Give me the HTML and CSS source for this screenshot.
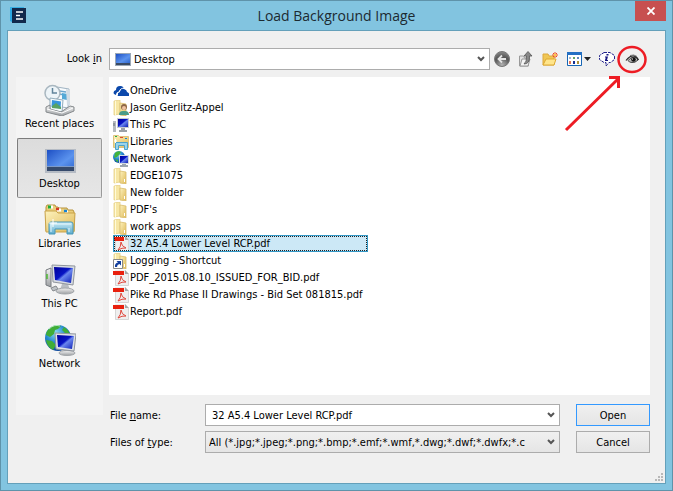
FILE: index.html
```html
<!DOCTYPE html>
<html lang="en">
<head>
<meta charset="utf-8">
<title>Load Background Image</title>
<link rel="stylesheet" href="styles.css">
</head>
<body>
<svg class="defs" aria-hidden="true">
  <defs>
    <linearGradient id="screen" x1="0" y1="0" x2="1" y2="1"><stop offset="0" stop-color="#1d4fc4"/><stop offset=".6" stop-color="#5b93ee"/><stop offset="1" stop-color="#2e66cf"/></linearGradient>
    <linearGradient id="navy" x1="0" y1="0" x2="1" y2="1"><stop offset="0" stop-color="#00009a"/><stop offset=".45" stop-color="#0714c4"/><stop offset=".55" stop-color="#6a86ee"/><stop offset="1" stop-color="#0a1cb4"/></linearGradient>
    <linearGradient id="paper" x1="0" y1="0" x2="1" y2="1"><stop offset="0" stop-color="#fdf2bd"/><stop offset="1" stop-color="#dfb957"/></linearGradient>
    <linearGradient id="metal" x1="0" y1="0" x2="0" y2="1"><stop offset="0" stop-color="#f4f4f4"/><stop offset="1" stop-color="#9c9fa2"/></linearGradient>
    <linearGradient id="glass" x1="0" y1="0" x2="0" y2="1"><stop offset="0" stop-color="#c9eaf5"/><stop offset="1" stop-color="#5daccd"/></linearGradient>
    <radialGradient id="globe" cx=".4" cy=".3" r=".75"><stop offset="0" stop-color="#8edcf5"/><stop offset=".5" stop-color="#2488cf"/><stop offset="1" stop-color="#0a3f94"/></radialGradient>
    <radialGradient id="ball" cx=".5" cy=".9" r=".9"><stop offset="0" stop-color="#b4b4b4"/><stop offset=".6" stop-color="#555"/><stop offset="1" stop-color="#8c8c8c"/></radialGradient>
  </defs>
  <symbol id="i-desktop" viewBox="0 0 32 32">
    <path d="M1 5h31v24H1z" fill="#b5bbc4"/><path d="M3 6h27v21H3z" fill="url(#screen)"/><path d="M3 23h27v4H3z" fill="#364a6b"/><path d="M3 22.500h27" stroke="#7d9ac8"/>
  </symbol>
  <symbol id="i-desktop-s" viewBox="0 0 16 13">
    <path d="M0 0h16v13H0z" fill="#9aa7b5"/><path d="M1 1h14v9H1z" fill="url(#screen)"/><path d="M1 10h14v2H1z" fill="#3a4a63"/>
  </symbol>
  <symbol id="i-recent" viewBox="0 0 32 32">
    <path d="M13 3l12 2-1 19-12-2z" fill="#f8fbfd" stroke="#9fb3c2"/><path d="M15 7l7 1M15 10l3 .5" stroke="#6aa5ce" stroke-width="1.500"/><path d="M18 9l6 1-1 6-5-1z" fill="#53a9d7"/><path d="M22 5l4 1v15h-3" fill="#d2dce4"/>
    <circle cx="8.500" cy="9" r="7.500" fill="#edf4f8" stroke="#a9b7c0" stroke-width="1.500"/><path d="M8.500 4v5H13" fill="none" stroke="#61849b" stroke-width="1.500"/>
    <path d="M6 14l13 2-1 12-12-2z" fill="#f5fafc" stroke="#92adbd"/><path d="M8 16l9 1.500-.5 7L7.500 23z" fill="#3795dc"/><path d="M8 22l4-3 5 4v2l-9-1z" fill="#58a264"/>
    <path d="M2 23l4-2v4l11 3 9-6 4 1v4l-12 5L2 28z" fill="url(#metal)" stroke="#85898c"/><path d="M3 25l15 4 11-5" fill="none" stroke="#fff"/>
  </symbol>
  <symbol id="i-libraries" viewBox="0 0 32 32">
    <path d="M2 8V3l1-2h8l1 2h2l1 1h8l1 2h5l1 2v19H2z" fill="#eace7b" stroke="#b8943f"/>
    <path d="M5 3h4M13 6h4M21 8h3" stroke="#fff" stroke-width="3"/><path d="M4 3h3" stroke="#1cae38" stroke-width="3"/><path d="M12 5h3" stroke="#d43a28" stroke-width="2.500"/><path d="M20 7h3" stroke="#1684d6" stroke-width="2.500"/>
    <path d="M1 7h11l2 2h17l-1 19H2z" fill="url(#paper)" stroke="#c9a34a"/>
    <path d="M5 30V20q0-2 2-2h20q2 0 2 2v10h-6v-5H11v5z" fill="url(#glass)" stroke="#4797b8"/><path d="M7 20h20M7 20v8M25 24v4" stroke="#e5f7fd" fill="none"/><path d="M9 15v8M5 19h8" stroke="#fff"/>
  </symbol>
  <symbol id="i-libraries-s" viewBox="0 0 16 16">
    <path d="M.5 13.500v-12h5l1 1h9v11z" fill="url(#paper)" stroke="#dfc37c"/><path d="M2 2.500h2" stroke="#22b04a"/><path d="M7 3.500h3" stroke="#df4b30"/><path d="M12 4.500h2" stroke="#1a86d8"/><path d="M2.500 15.500v-7h12v7h-3v-4h-6v4z" fill="#9bd3ea" stroke="#4aa3cb"/><path d="M1 7h3M2.500 5v4" stroke="#fff"/>
  </symbol>
  <symbol id="i-pc" viewBox="0 0 32 32">
    <path d="M2 6l5-2v19l-5-2z" fill="url(#metal)" stroke="#777b80"/><path d="M3 10v5" stroke="#4eb732" stroke-width="1.500"/>
    <path d="M7 24l5-2 2 3-5 2z" fill="#bfc3c7" stroke="#85898d"/><path d="M18 20h6l2 6H16z" fill="#b9bec3"/><ellipse cx="21" cy="27" rx="9" ry="3" fill="url(#metal)" stroke="#a2a6aa"/>
    <path d="M8 1l23 1-2 19-20-3z" fill="#d9dde2" stroke="#8e949c"/><path d="M10 3l19 1-2 15-16-3z" fill="url(#navy)"/>
  </symbol>
  <symbol id="i-network" viewBox="0 0 32 32">
    <circle cx="14" cy="14" r="13" fill="url(#globe)"/><path d="M6 4q5-4 11-2l-3 3-3 1-1 4-4 3-4-2q0-4 4-7zM2 16l6 1 4 4-3 5Q3 23 2 16zM20 3q5 3 6 8l-5-2-3-3z" fill="#40ad37"/><path d="M5 5q5-5 11-3" fill="none" stroke="#b5ebba"/>
    <path d="M20 25h6l1 4h-8z" fill="#b9bec3"/><ellipse cx="23" cy="29" rx="8" ry="2.500" fill="url(#metal)" stroke="#a2a6aa"/>
    <path d="M11 9l21 1-2 17-18-2z" fill="#dee2e6" stroke="#8e949c"/><path d="M13 11l17 1-2 13-14-2z" fill="url(#navy)"/>
  </symbol>
  <symbol id="i-network-s" viewBox="0 0 16 16">
    <circle cx="6" cy="6" r="6" fill="url(#globe)"/><path d="M2 2q3-3 6-1L6 4 4 6 1 7zM2 8l3 1v2Q3 11 2 8z" fill="#45b43b"/><path d="M6 4h10v9H6z" fill="#d4dadf"/><path d="M7 5h8v7H7z" fill="url(#navy)"/><path d="M9 13h4v1h2v2H7v-2h2z" fill="#9ca6af"/>
  </symbol>
  <symbol id="i-pc-s" viewBox="0 0 16 16">
    <path d="M0 4h3v11H0z" fill="#b5babf"/><path d="M1 6v3" stroke="#687078"/><path d="M4 1h12v10H4z" fill="#c5cbd1"/><path d="M5 2h10v8H5z" fill="url(#navy)"/><path d="M8 11h4v2h2v2H6v-2h2z" fill="#9ba1a7"/>
  </symbol>
  <symbol id="i-cloud" viewBox="0 0 16 16">
    <path d="M1 11Q-.5 8 3 7q0-4 4-4 3-.5 4 3-4-1-5 3-3 0-3 3z" fill="#0b48ab"/><path d="M5 13q-2-3 2-4 0-4 4-3 3 1 3 3 3 1 2 4z" fill="#0b48ab"/><path d="M4.500 12q-1-3 2-3.500 1-4 5-3" fill="none" stroke="#fff"/>
  </symbol>
  <symbol id="i-folder" viewBox="0 0 16 16">
    <path d="M1 1l6-1v14l-6 1z" fill="#f7e7a5" stroke="#e6cf85" stroke-width=".8"/><path d="M7 3l6 1v12l-6-1z" fill="url(#paper)" stroke="#d9bc6c" stroke-width=".8"/><path d="M2 1h1v14H2z" fill="#fffbd8"/><path d="M11 11h1v3h-1z" fill="#fff"/>
  </symbol>
  <symbol id="i-user" viewBox="0 0 16 16">
    <use href="#i-folder"/><circle cx="11" cy="7" r="3" fill="#8d6646"/><circle cx="11" cy="8" r="2" fill="#efc3a0"/><path d="M6 15q0-4 4-4h2q4 0 4 4z" fill="#4b9c87"/>
  </symbol>
  <symbol id="i-shortcut" viewBox="0 0 16 16">
    <use href="#i-folder"/><path d="M.5 6.500h9v9h-9z" fill="#fff" stroke="#8a8a8a"/><path d="M2 14q-.5-4 3-4.500L3.500 8H8v4.500L6.500 11Q4 11.500 4 14z" fill="#143f9e"/>
  </symbol>
  <symbol id="i-pdf" viewBox="0 0 16 16">
    <path d="M2 0h10l4 4v12H2z" fill="#efefef"/><path d="M2.500 5v10.500h13V4" fill="none" stroke="#d6d6d6"/><path d="M12 0l4 4h-4z" fill="#a6a6a6"/><path d="M0 1h11v4H0z" fill="#e8200e"/><path d="M8 6q.5 4.500 5 6-4-.5-8 2Q8 11 8 6z" fill="none" stroke="#e0473c"/>
  </symbol>
  <symbol id="i-chevron" viewBox="0 0 8 6"><path d="M1 1l3 3 3-3" fill="none" stroke="#555" stroke-width="2"/></symbol>
</svg>

<main class="window">
  <header class="titlebar">
    <svg class="app-icon" viewBox="0 0 16 16"><path d="M0 1l2-1v15l-2-1z" fill="#2da8e2"/><path d="M0 0h14v2H0z" fill="#38afe4"/><path d="M2 1h14v15H2z" fill="#12294c"/><path d="M6 5h7M6 8.500h4M6 12h7" stroke="#fff" stroke-width="1.500"/></svg>
    <h1 class="title">Load Background Image</h1>
    <button class="close" aria-label="Close"><svg viewBox="0 0 8 8"><path d="M.5.5l7 7M7.500.5l-7 7" stroke="#fff" stroke-width="1.800"/></svg></button>
  </header>

  <form class="dialog">
    <label class="look-label" for="look">Look <u>i</u>n</label>
    <div class="look-row">
      <div class="combo combo-look">
        <select id="look"><option>Desktop</option></select>
        <svg class="combo-icon"><use href="#i-desktop-s"/></svg>
        <svg class="chevron"><use href="#i-chevron"/></svg>
      </div>
      <div class="toolbar">
        <button type="button" class="tool" aria-label="Back"><svg viewBox="0 0 16 16"><circle cx="8" cy="8" r="7.500" fill="url(#ball)" stroke="#777"/><path d="M12 8H5M8 4.500L4.500 8 8 11.500" fill="none" stroke="#e4e4e4" stroke-width="1.800"/></svg></button>
        <button type="button" class="tool" aria-label="Up one level"><svg viewBox="0 0 16 16"><path d="M1.500 5h4l1 2h4v8h-9z" fill="#e4e4e4" stroke="#999"/><path d="M2 15l2-7h8l-2 7z" fill="#f5f5f5" stroke="#999"/><path d="M6 13q3-2 2.500-8H6l4-4.500L14 5h-2.500q.5 8-5.500 8z" fill="#888" stroke="#555" stroke-width=".8"/></svg></button>
        <button type="button" class="tool" aria-label="New folder"><svg viewBox="0 0 16 16"><path d="M1 3h5l1 2h5v9H1z" fill="#efc654" stroke="#dda83c"/><path d="M1 14l3-6h10l-2 6z" fill="#ffe58b" stroke="#dda932"/><path d="M13 1v6M10 4h6M11 2l4 4M15 2l-4 4" stroke="#ee4c24"/><circle cx="13" cy="4" r="1.300" fill="#ffc647"/></svg></button>
        <button type="button" class="tool tool-view" aria-label="View menu"><svg viewBox="0 0 25 16"><path d="M1.500 1.500h14v13h-14z" fill="#fff" stroke="#1766b5"/><path d="M1 1h15v3H1z" fill="#2470c4"/><path d="M3 6h2v2H3z" fill="#a7b6ca"/><path d="M7 6h2v2H7z" fill="#66a565"/><path d="M11 6h2v2h-2z" fill="#6087bd"/><path d="M3 10h2v3H3z" fill="#e77755"/><path d="M7 10h2v3H7z" fill="#172f91"/><path d="M11 10h2v3h-2z" fill="#b19138"/><path d="M18 6h7l-3.500 4z" fill="#222"/></svg></button>
        <button type="button" class="tool" aria-label="Information"><svg viewBox="0 0 16 16"><path d="M5 1.500h6l4.500 3v4l-4 3H10L7 15v-3.500H5l-4.500-3v-4z" fill="#fff" stroke="#23238c" stroke-dasharray="3 1"/><path d="M7.500 3h2v1.500h-2zM6 5.500h3L8 9h1v1H6V9l.8-2.500H6z" fill="#171781"/></svg></button>
        <button type="button" class="tool tool-eye" aria-label="Preview"><svg viewBox="0 0 18 16"><path d="M5 9.500q3-3.500 6-3.500 3 0 4 3-3 3-6 2.500-3 0-4-2z" fill="#bbb" stroke="#444"/><path d="M3 9.500q4-5 8-4.500 3 .5 4.500 4" fill="none" stroke="#222" stroke-width="1.200"/><path d="M7 4.500q4-1.500 7 1" fill="none" stroke="#777"/><circle cx="10.500" cy="8.500" r="2.300" fill="#111"/><path d="M9 8h1" stroke="#fff"/></svg></button>
        <svg class="callout" viewBox="0 0 90 95" aria-hidden="true"><ellipse cx="72" cy="19.500" rx="13.500" ry="12.500" fill="none" stroke="#ed1c24" stroke-width="2.500"/><path d="M6 90l52-51M49 37.500h9.500V48" fill="none" stroke="#ed1c24" stroke-width="3"/></svg>
      </div>
    </div>

    <nav class="places">
      <button type="button" class="place"><svg><use href="#i-recent"/></svg>Recent places</button>
      <button type="button" class="place current"><svg><use href="#i-desktop"/></svg>Desktop</button>
      <button type="button" class="place"><svg><use href="#i-libraries"/></svg>Libraries</button>
      <button type="button" class="place"><svg><use href="#i-pc"/></svg>This PC</button>
      <button type="button" class="place"><svg><use href="#i-network"/></svg>Network</button>
    </nav>

    <ul class="files" role="listbox" aria-label="Files">
      <li role="option"><svg><use href="#i-cloud"/></svg>OneDrive</li>
      <li role="option"><svg><use href="#i-user"/></svg>Jason Gerlitz-Appel</li>
      <li role="option"><svg><use href="#i-pc-s"/></svg>This PC</li>
      <li role="option"><svg><use href="#i-libraries-s"/></svg>Libraries</li>
      <li role="option"><svg><use href="#i-network-s"/></svg>Network</li>
      <li role="option"><svg><use href="#i-folder"/></svg>EDGE1075</li>
      <li role="option"><svg><use href="#i-folder"/></svg>New folder</li>
      <li role="option"><svg><use href="#i-folder"/></svg>PDF's</li>
      <li role="option"><svg><use href="#i-folder"/></svg>work apps</li>
      <li role="option" class="selected" aria-selected="true"><svg><use href="#i-pdf"/></svg>32 A5.4 Lower Level RCP.pdf</li>
      <li role="option"><svg><use href="#i-shortcut"/></svg>Logging - Shortcut</li>
      <li role="option"><svg><use href="#i-pdf"/></svg>PDF_2015.08.10_ISSUED_FOR_BID.pdf</li>
      <li role="option"><svg><use href="#i-pdf"/></svg>Pike Rd Phase II Drawings - Bid Set 081815.pdf</li>
      <li role="option"><svg><use href="#i-pdf"/></svg>Report.pdf</li>
    </ul>

    <div class="fields">
      <label for="name">File <u>n</u>ame:</label>
      <div class="combo">
        <input id="name" type="text" value="32 A5.4 Lower Level RCP.pdf">
        <svg class="chevron"><use href="#i-chevron"/></svg>
      </div>
      <button type="button" class="action primary">Open</button>
      <label for="type">Files of <u>t</u>ype:</label>
      <div class="combo combo-type">
        <select id="type"><option>All (*.jpg;*.jpeg;*.png;*.bmp;*.emf;*.wmf,*.dwg;*.dwf;*.dwfx;*.c</option></select>
        <svg class="chevron"><use href="#i-chevron"/></svg>
      </div>
      <button type="button" class="action">Cancel</button>
    </div>
    <svg class="grip" viewBox="0 0 8 8" aria-hidden="true"><path d="M6 0h2v2H6zM3 3h2v2H3zM6 3h2v2H6zM0 6h2v2H0zM3 6h2v2H3zM6 6h2v2H6z" fill="#b8b8b8"/></svg>
  </form>
</main>
</body>
</html>
```

FILE: styles.css
```css
* { box-sizing: border-box; }

body {
  margin: 0;
  color: #000;
  font: 11px/15px "DejaVu Sans Condensed", Tahoma, "DejaVu Sans", sans-serif;
}

button, input, select {
  margin: 0;
  padding: 0;
  border: 0;
  border-radius: 0;
  color: inherit;
  font: inherit;
}

.defs { position: absolute; width: 0; height: 0; }

.window {
  display: flex;
  flex-direction: column;
  min-height: 100vh;
  padding: 0 6px 6px;
  border: 1px solid #5f93aa;
  background: #82c4e0;
}

.titlebar {
  display: grid;
  grid-template-columns: 31px 1fr 31px;
  height: 29px;
}
.app-icon { width: 16px; height: 16px; margin: 6px 0 0 3px; }
.title {
  margin: 0;
  padding-top: 4px;
  color: #1c2a31;
  font: 14px/22px "Open Sans", "Noto Sans", sans-serif;
  text-align: center;
}
.close {
  display: grid;
  place-items: center;
  height: 20px;
  background: #c75050;
}
.close svg { width: 8px; height: 8px; }

.dialog {
  position: relative;
  flex: 1;
  display: grid;
  grid-template-columns: 87px 1fr;
  grid-template-rows: 22px 1fr auto;
  column-gap: 6px;
  padding: 17px 15px 30px 8px;
  border: 1px solid #64a0ba;
  background: #f0f0f0;
}

.look-label { padding-right: 1px; line-height: 22px; text-align: right; }
.look-row { display: grid; grid-template-columns: 1fr 160px; }

.combo { display: grid; height: 22px; }
.combo > * { grid-area: 1 / 1; }
.combo input, .combo select {
  appearance: none;
  width: 100%;
  min-width: 0;
  padding: 0 18px 0 6px;
  border: 1px solid #acacac;
  background: #fff;
}
.combo-look select { padding-left: 24px; }
.combo-type select { padding-left: 3px; background: linear-gradient(#f0f0f0, #e5e5e5); }
.combo-icon { width: 16px; height: 13px; margin-left: 6px; align-self: center; pointer-events: none; }
.chevron {
  width: 8px;
  height: 6px;
  margin-right: 5px;
  place-self: center end;
  pointer-events: none;
}

.toolbar {
  position: relative;
  display: flex;
  align-items: center;
  gap: 8px;
  padding-left: 4px;
}
.tool { width: 16px; height: 16px; background: none; }
.tool svg { display: block; width: 100%; height: 100%; overflow: visible; }
.tool-view { width: 25px; }
.tool-eye { width: 18px; }
.callout {
  position: absolute;
  top: -8px;
  right: 0;
  width: 90px;
  height: 95px;
  pointer-events: none;
}

.places {
  grid-row: 2 / 4;
  display: flex;
  flex-direction: column;
  margin: 7px 0 38px;
  padding: 1px;
  background: #f4f4f4;
}
.place {
  display: flex;
  flex-direction: column;
  align-items: center;
  height: 60px;
  padding-top: 5px;
  border: 1px solid transparent;
  background: none;
  white-space: nowrap;
}
.place svg { width: 32px; height: 32px; flex: none; }
.place.current {
  border-color: #7d7d7d #9a9a9a #9a9a9a #7d7d7d;
  border-radius: 2px;
  background: linear-gradient(#dcdcdc, #e6e6e6);
}

.files {
  margin: 7px 0 9px;
  padding: 5px 4px;
  background: #fff;
  list-style: none;
}
.files li {
  display: flex;
  align-items: center;
  gap: 1px;
  height: 17px;
  white-space: nowrap;
}
.files svg { width: 16px; height: 16px; flex: none; }
.files .selected {
  position: relative;
  width: 255px;
  background: #cce8f6;
  outline: 1px solid #3399c8;
  outline-offset: -1px;
}
.files .selected::after {
  content: "";
  position: absolute;
  inset: 1px;
  border: 1px dotted #222;
}

.fields {
  display: grid;
  grid-template-columns: 96px 1fr 74px;
  row-gap: 5px;
  align-items: center;
}
.fields label { padding-left: 1px; }
.fields .combo { margin-right: 16px; }
.action {
  height: 22px;
  border: 1px solid #acacac;
  background: linear-gradient(#f0f0f0, #e5e5e5);
}
.action.primary { border-color: #3399ff; }

.grip { position: absolute; right: 2px; bottom: 2px; width: 8px; height: 8px; }
```
